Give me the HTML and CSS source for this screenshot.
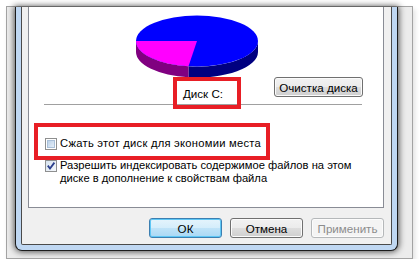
FILE: index.html
```html
<!DOCTYPE html>
<html lang="ru">
<head>
<meta charset="utf-8">
<title>Свойства диска</title>
<link rel="stylesheet" href="styles.css">
</head>
<body>
<div class="frame">
  <div class="window">
    <div class="client">
      <div class="panel">
        <div class="chart">
          <svg width="124" height="66" viewBox="0 0 124 66">
            <path d="M123,28 A61,25.5 0 0 1 53.5,53.25 L53.5,64.25 A61,25.5 0 0 0 123,39 Z" fill="#000080"/>
            <path d="M53.5,53.25 A61,25.5 0 0 1 1,28 L1,39 A61,25.5 0 0 0 53.5,64.25 Z" fill="#800080"/>
            <ellipse cx="62" cy="28" rx="61" ry="25.5" fill="#0000ff"/>
            <path d="M62,28 L53.5,53.25 A61,25.5 0 0 1 1,28 Z" fill="#ff00ff"/>
          </svg>
        </div>
        <div class="drive-row">
          <span class="drive-label">Диск С:</span>
          <button class="btn cleanup">Очистка диска</button>
        </div>
        <div class="sep"></div>
        <div class="check first">
          <svg class="box" width="12" height="12" viewBox="0 0 12 12">
            <defs><linearGradient id="g1" x1="0" y1="0" x2="1" y2="1"><stop offset="0" stop-color="#b7cfe8"/><stop offset="1" stop-color="#e8f0f9"/></linearGradient></defs>
            <rect x="0.5" y="0.5" width="11" height="11" fill="#fff" stroke="#8e8f8f"/>
            <rect x="2.5" y="2.5" width="7" height="7" fill="url(#g1)" stroke="#a9c0d9"/>
          </svg>
          <span class="check-text wide">Сжать этот диск для экономии места</span>
        </div>
        <div class="check">
          <svg class="box" width="12" height="12" viewBox="0 0 12 12">
            <defs><linearGradient id="g2" x1="0" y1="0" x2="1" y2="1"><stop offset="0" stop-color="#d6e2ee"/><stop offset="1" stop-color="#f6f9fc"/></linearGradient></defs>
            <rect x="0.5" y="0.5" width="11" height="11" fill="url(#g2)" stroke="#8e8f8f"/>
            <path d="M2.8,5.6 L5,8.6 L9.4,2.6" fill="none" stroke="#2b3f8c" stroke-width="1.8"/>
          </svg>
          <span class="check-text">Разрешить индексировать содержимое файлов на этом<br>диске в дополнение к свойствам файла</span>
        </div>
        <div class="mark mark-drive"></div>
        <div class="mark mark-compress"></div>
      </div>
      <div class="buttons">
        <button class="btn default">ОК</button>
        <button class="btn">Отмена</button>
        <button class="btn disabled">Применить</button>
      </div>
    </div>
  </div>
</div>
</body>
</html>
```
FILE: styles.css
```css
* { box-sizing: border-box; }
html, body { margin: 0; padding: 0; background: #ffffff; }
body {
  font-family: "Liberation Sans", Arial, sans-serif;
  font-size: 11.6px;
  color: #000;
}
.frame {
  margin: 6px 0 0 6px;
  width: 407px;
  height: 253px;
  border: 1px solid #a3a3a3;
  background: #ececec;
  padding: 0 0 7px 8px;
  box-shadow: 2px 3px 5px rgba(0,0,0,0.12);
}
.window {
  width: 383px;
  height: 244px;
  background: #bfd7f2;
  border: 1px solid #1c1c1c;
  border-top: none;
  border-radius: 0 0 7px 7px;
  padding: 0 5px 5px 5px;
  box-shadow: 0 0 6px 1px rgba(0,0,0,0.65);
}
.client {
  height: 100%;
  background: #f0f0f0;
  border: 1px solid #4a4a4a;
  border-top: none;
  border-radius: 0 0 2px 2px;
  padding: 0 7px 0 6px;
}
.panel {
  position: relative;
  height: 201px;
  padding-top: 6px;
  background: #fff;
  border: 1px solid #898c95;
  border-top: none;
}
.chart {
  height: 64px;
  margin-left: 106px;
}
.chart svg { display: block; overflow: visible; }
.drive-row {
  display: flex;
  align-items: flex-start;
}
.drive-label {
  margin: 10px 0 0 154px;
  line-height: 14px;
}
.btn {
  font-family: "Liberation Sans", Arial, sans-serif;
  font-size: 11.6px;
  color: #000;
  height: 20px;
  padding: 0;
  border: 1px solid #707070;
  border-radius: 3px;
  background: linear-gradient(#f2f2f2 0%, #ebebeb 50%, #dddddd 51%, #cfcfcf 100%);
  box-shadow: inset 0 0 0 1px #fbfbfb;
}
.cleanup {
  width: 89px;
  margin: 0 20px 0 auto;
}
.sep {
  height: 1px;
  margin: 3px 21px 0 15px;
  background: #a0a0a0;
}
.check {
  display: flex;
  align-items: flex-start;
  padding-left: 16px;
  margin-top: 9px;
  line-height: 13px;
  font-size: 11.2px;
}
.check.first { margin-top: 32px; }
.check-text.wide { letter-spacing: 0.25px; }
.box { flex: none; margin: 1px 3px 0 0; display: block; }
.mark {
  position: absolute;
  border: 4px solid #e81e25;
}
.mark-drive { left: 144px; top: 70px; width: 68px; height: 32px; }
.mark-compress { left: 5px; top: 116px; width: 236px; height: 37px; }
.buttons {
  display: flex;
  justify-content: flex-end;
  gap: 8px;
  margin-top: 10px;
}
.buttons .btn { width: 73px; }
.btn.default {
  border-color: #3c7fb1;
  background: linear-gradient(#e5f4fc 0%, #d4edfb 50%, #bfe3f8 51%, #aad8f4 100%);
  box-shadow: inset 0 0 0 1px #5ec7f5;
}
.btn.disabled {
  color: #8c8c8c;
  border-color: #b5b8ba;
  background: #f4f4f4;
  box-shadow: inset 0 0 0 1px #fcfcfc;
}
```
